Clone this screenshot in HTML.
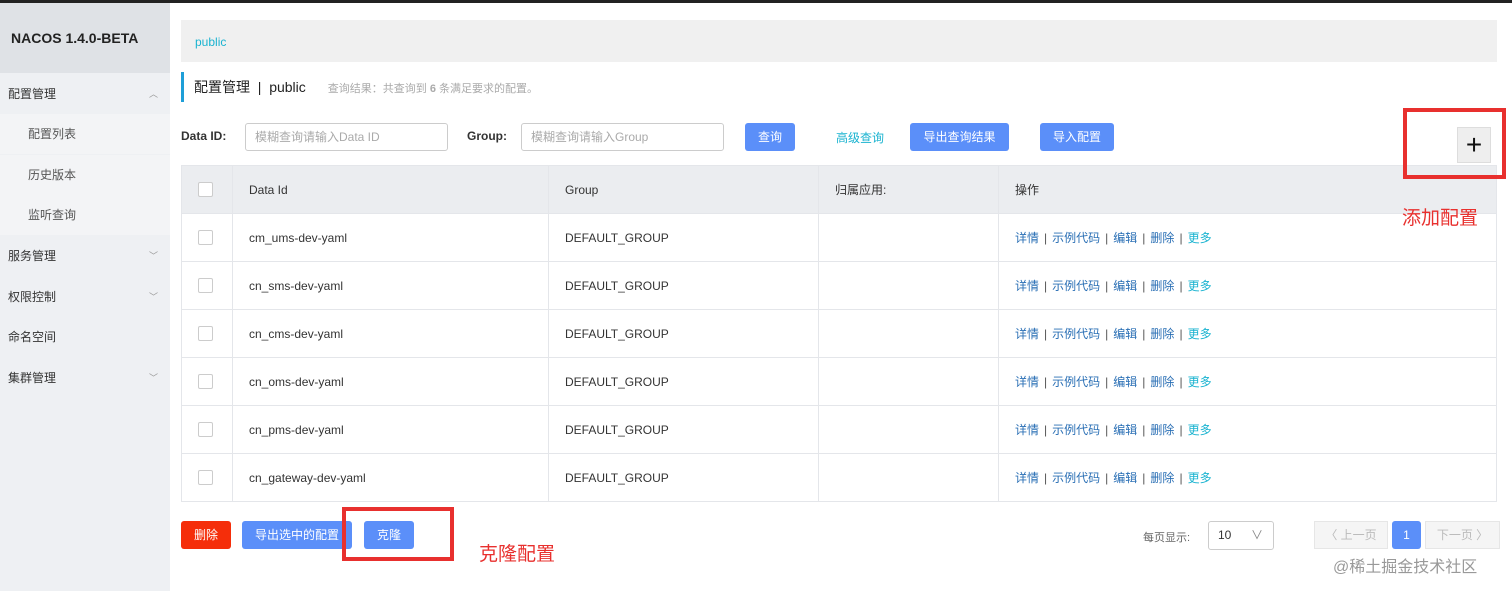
<!DOCTYPE html>
<html><head><meta charset="utf-8"><style>
*{box-sizing:border-box;margin:0;padding:0}
body{width:1512px;height:591px;overflow:hidden;background:#fff;font-family:"Liberation Sans","Noto Sans CJK SC",sans-serif;font-size:12px;color:#333;position:relative}
.abs{position:absolute}
.top{left:0;top:0;width:1512px;height:3px;background:#222}
.side{left:0;top:3px;width:170px;height:588px;background:#eef0f3}
.logo{left:0;top:3px;width:170px;height:70px;background:#dfe2e6;font-weight:bold;font-size:14px;color:#222;line-height:70px;padding-left:11px}
.mi{left:0;width:170px;height:40px;line-height:40px;padding-left:8px;font-size:12px;color:#333}
.sub{background:#f3f4f6;padding-left:28px;color:#555}
.car{right:12px;top:0;color:#999;font-size:9px}
.bc{left:181px;top:20px;width:1316px;height:42px;background:#f0f0f0;color:#1ab3d0;padding-left:14px;line-height:44px;font-size:12px}
.title{left:181px;top:72px;height:30px;border-left:3px solid #1e9fd8;padding-left:10px;line-height:30px;font-size:14px;color:#222}
.title span{font-size:11px;color:#aaa;margin-left:22px}
.lbl{font-weight:bold;font-size:12px;color:#333}
.inp{height:28px;border:1px solid #ccc;border-radius:3px;color:#aaa;padding-left:9px;line-height:26px;font-size:12px}
.btn{height:28px;background:#5b8ff9;color:#fff;border-radius:3px;text-align:center;line-height:28px;font-size:12px}
table{position:absolute;left:181px;top:165px;width:1316px;border-collapse:collapse;font-size:12px}
td{border:1px solid #e4e6ea;height:48px;padding-left:16px;color:#333}
tr.h td{background:#ebedf0;color:#333}
.cb{display:inline-block;width:15px;height:15px;border:1px solid #ccc;border-radius:2px;background:#fff;vertical-align:middle}
.ops a{color:#2a6fb5;text-decoration:none}
.ops .m{color:#1ab3d0}
.ops i{font-style:normal;color:#555;margin:0 5px}
.red{border:4px solid #e8302e;z-index:5}
.rt{color:#e8302e;font-size:19px;z-index:5}
</style></head><body>
<div class="abs top"></div>
<div class="abs side"></div>
<div class="abs logo">NACOS 1.4.0-BETA</div>
<div class="abs mi" style="top:74px">配置管理<span class="abs car">︿</span></div>
<div class="abs mi sub" style="top:114px">配置列表</div>
<div class="abs mi sub" style="top:155px">历史版本</div>
<div class="abs mi sub" style="top:195px">监听查询</div>
<div class="abs mi" style="top:236px">服务管理<span class="abs car">﹀</span></div>
<div class="abs mi" style="top:277px">权限控制<span class="abs car">﹀</span></div>
<div class="abs mi" style="top:317px">命名空间</div>
<div class="abs mi" style="top:358px">集群管理<span class="abs car">﹀</span></div>

<div class="abs bc">public</div>
<div class="abs title">配置管理 &nbsp;| &nbsp;public<span>查询结果：共查询到 <b>6</b> 条满足要求的配置。</span></div>

<div class="abs lbl" style="left:181px;top:129px">Data ID:</div>
<div class="abs inp" style="left:245px;top:123px;width:203px">模糊查询请输入Data ID</div>
<div class="abs lbl" style="left:467px;top:129px">Group:</div>
<div class="abs inp" style="left:521px;top:123px;width:203px">模糊查询请输入Group</div>
<div class="abs btn" style="left:745px;top:123px;width:50px">查询</div>
<div class="abs" style="left:836px;top:129px;color:#1ab3d0">高级查询</div>
<div class="abs btn" style="left:910px;top:123px;width:99px">导出查询结果</div>
<div class="abs btn" style="left:1040px;top:123px;width:74px">导入配置</div>

<table>
<tr class="h"><td style="width:51px"><span class="cb"></span></td><td style="width:316px">Data Id</td><td style="width:270px">Group</td><td style="width:180px">归属应用:</td><td>操作</td></tr>
<tr><td><span class="cb"></span></td><td>cm_ums-dev-yaml</td><td>DEFAULT_GROUP</td><td></td><td class="ops"><a>详情</a><i>|</i><a>示例代码</a><i>|</i><a>编辑</a><i>|</i><a>删除</a><i>|</i><a class="m">更多</a></td></tr>
<tr><td><span class="cb"></span></td><td>cn_sms-dev-yaml</td><td>DEFAULT_GROUP</td><td></td><td class="ops"><a>详情</a><i>|</i><a>示例代码</a><i>|</i><a>编辑</a><i>|</i><a>删除</a><i>|</i><a class="m">更多</a></td></tr>
<tr><td><span class="cb"></span></td><td>cn_cms-dev-yaml</td><td>DEFAULT_GROUP</td><td></td><td class="ops"><a>详情</a><i>|</i><a>示例代码</a><i>|</i><a>编辑</a><i>|</i><a>删除</a><i>|</i><a class="m">更多</a></td></tr>
<tr><td><span class="cb"></span></td><td>cn_oms-dev-yaml</td><td>DEFAULT_GROUP</td><td></td><td class="ops"><a>详情</a><i>|</i><a>示例代码</a><i>|</i><a>编辑</a><i>|</i><a>删除</a><i>|</i><a class="m">更多</a></td></tr>
<tr><td><span class="cb"></span></td><td>cn_pms-dev-yaml</td><td>DEFAULT_GROUP</td><td></td><td class="ops"><a>详情</a><i>|</i><a>示例代码</a><i>|</i><a>编辑</a><i>|</i><a>删除</a><i>|</i><a class="m">更多</a></td></tr>
<tr><td><span class="cb"></span></td><td>cn_gateway-dev-yaml</td><td>DEFAULT_GROUP</td><td></td><td class="ops"><a>详情</a><i>|</i><a>示例代码</a><i>|</i><a>编辑</a><i>|</i><a>删除</a><i>|</i><a class="m">更多</a></td></tr>
</table>

<div class="abs" style="left:1457px;top:127px;width:34px;height:36px;background:#eee;border:1px solid #ddd;text-align:center;line-height:34px;font-size:28px;color:#111;z-index:4">+</div>
<div class="abs red" style="left:1403px;top:108px;width:103px;height:71px"></div>
<div class="abs rt" style="left:1402px;top:203px">添加配置</div>

<div class="abs btn" style="left:181px;top:521px;width:50px;background:#f52e0a">删除</div>
<div class="abs btn" style="left:242px;top:521px;width:110px">导出选中的配置</div>
<div class="abs btn" style="left:364px;top:521px;width:50px">克隆</div>
<div class="abs red" style="left:342px;top:507px;width:112px;height:54px"></div>
<div class="abs rt" style="left:479px;top:539px">克隆配置</div>

<div class="abs" style="left:1143px;top:529px;color:#666;font-size:11px">每页显示:</div>
<div class="abs" style="left:1208px;top:521px;width:66px;height:29px;border:1px solid #ccc;border-radius:3px;padding-left:9px;line-height:27px;color:#333">10<span style="position:absolute;right:10px;color:#888">∨</span></div>
<div class="abs" style="left:1314px;top:521px;width:74px;height:28px;border:1px solid #e6e6e6;background:#f5f5f5;color:#bbb;text-align:center;line-height:27px">〈 上一页</div>
<div class="abs btn" style="left:1392px;top:521px;width:29px">1</div>
<div class="abs" style="left:1425px;top:521px;width:75px;height:28px;border:1px solid #e6e6e6;background:#f5f5f5;color:#bbb;text-align:center;line-height:27px">下一页 〉</div>
<div class="abs" style="left:1333px;top:553px;color:#999;font-size:16px">@稀土掘金技术社区</div>
</body></html>
